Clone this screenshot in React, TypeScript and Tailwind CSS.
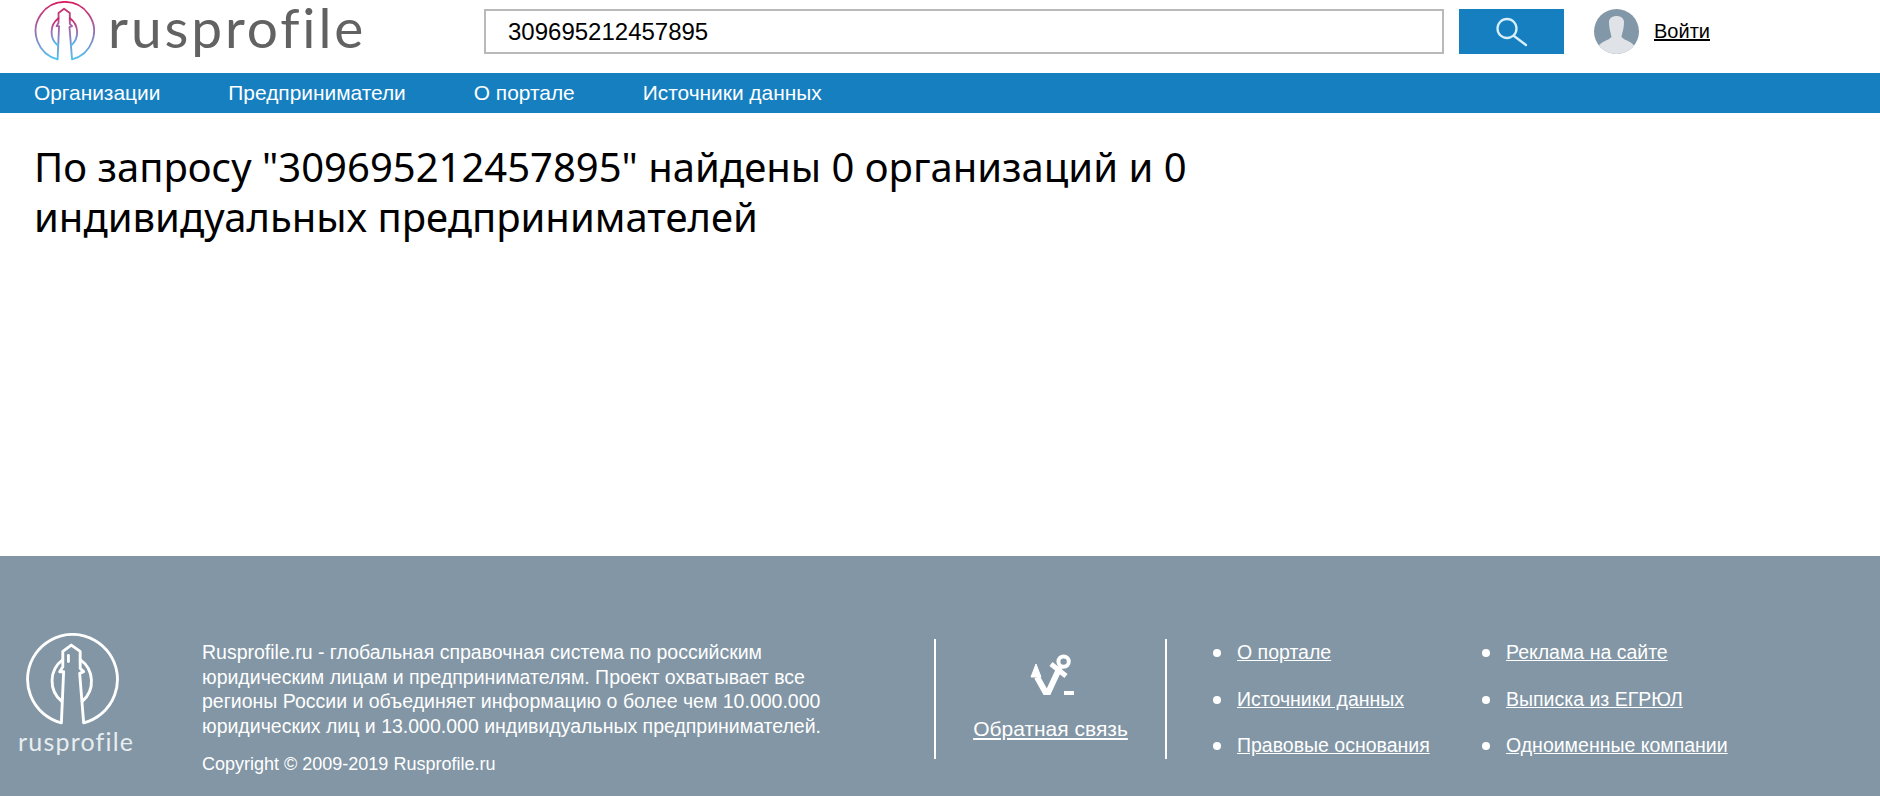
import React from 'react';

const navItems = ['Организации', 'Предприниматели', 'О портале', 'Источники данных'];
const linksLeft = ['О портале', 'Источники данных', 'Правовые основания'];
const linksRight = ['Реклама на сайте', 'Выписка из ЕГРЮЛ', 'Одноименные компании'];

const Lighthouse: React.FC<{ stroke: string; className: string; width: number }> = ({ stroke, className, width }) => (
  <svg viewBox="0 0 92 92" className={className} fill="none" stroke={stroke} strokeWidth={width} strokeLinejoin="round" strokeLinecap="round">
    <path d="M35.6 88 A44 44 0 1 1 57.4 88 L53.5 39.5 L57.4 37.8 L54 34.6 L54 18 L45.3 11.8 L37 18 L37 33 L34 38 L37.8 37.8 Z" />
    <path d="M37 26 A26 26 0 0 0 36 67" />
    <path d="M54 26 A26 26 0 0 1 56 67" />
    <path d="M42.5 22 L42.5 28" />
  </svg>
);

const LinkColumn: React.FC<{ items: string[]; width: string }> = ({ items, width }) => (
  <ul className={`${width} flex flex-col gap-[22.5px]`}>
    {items.map(item => (
      <li key={item} className="flex items-center h-6">
        <span className="w-[8px] h-[8px] rounded-full bg-white mr-[16px]"></span>
        <a className="underline text-[19.5px]">{item}</a>
      </li>
    ))}
  </ul>
);

export default function App() {
  return (
    <div className="h-[796px] flex flex-col bg-white overflow-hidden font-['Liberation_Sans',sans-serif]">
      <header className="h-[73px] flex items-start shrink-0">
        <div className="w-[484px] h-[63px] pl-[34px] flex items-center">
          <svg width="0" height="0" className="absolute">
            <defs>
              <linearGradient id="logoGrad" x1="0" y1="0" x2="0" y2="1">
                <stop offset="0" stopColor="#d81b60" />
                <stop offset="0.5" stopColor="#9a6fb0" />
                <stop offset="1" stopColor="#4fc3f0" />
              </linearGradient>
            </defs>
          </svg>
          <Lighthouse stroke="url(#logoGrad)" className="w-[61px] h-[61px]" width={2.8} />
          <span className="ml-[13px] mb-[8px] text-[55px] leading-[61px] tracking-[2.9px] text-[#626262] font-['Lato',sans-serif] font-normal">rusprofile</span>
        </div>
        <div className="mt-[9px] w-[960px] h-[45px] border-2 border-[#b9b9b9] pl-[22px] flex items-center text-[24px] text-black">309695212457895</div>
        <button className="mt-[9px] ml-[15px] w-[105px] h-[45px] bg-[#167fc0] flex items-center justify-center">
          <svg viewBox="0 0 36 36" className="w-[36px] h-[36px]" fill="none" stroke="#d8effa" strokeWidth={2.3} strokeLinecap="round">
            <circle cx="13" cy="14.5" r="9.5" />
            <path d="M20 22 L32 31" />
          </svg>
        </button>
        <div className="mt-[9px] ml-[30px] w-[45px] h-[45px] rounded-full bg-[#8298a8] overflow-hidden">
          <svg viewBox="0 0 45 45" className="w-[45px] h-[45px]">
            <path d="M15 13 C15 5 30 5 30 13 C30 20 28 24 27.5 28 C31 32 38 32 41 38 L41 45 L4 45 L4 38 C7 32 14 32 17.5 28 C17 24 15 20 15 13 Z" fill="#dfe3e7" />
          </svg>
        </div>
        <a className="mt-[19px] ml-[15px] underline text-[20px] leading-[24px] text-black">Войти</a>
      </header>

      <nav className="h-[40px] bg-[#167fc0] shrink-0 pl-[34px] flex items-center gap-[68px] text-[20.9px] text-white">
        {navItems.map(item => <a key={item}>{item}</a>)}
      </nav>

      <main className="flex-1 pl-[34px]">
        <h1 className="mt-[29px] w-[1180px] text-[40px] leading-[50px] text-black font-['Noto_Sans',sans-serif] font-normal">
          По запросу "309695212457895" найдены 0 организаций и 0 индивидуальных предпринимателей
        </h1>
      </main>

      <footer className="h-[240px] shrink-0 bg-[#8296a5] text-white flex items-start">
        <div className="w-[202px] pl-[18px] pt-[77px] shrink-0 flex flex-col">
          <Lighthouse stroke="#ffffff" className="ml-[7px] w-[94px] h-[94px]" width={2.8} />
          <span className="text-[25px] leading-[28px] tracking-[1.2px] font-['Lato',sans-serif] font-normal text-[#e8edf0]">rusprofile</span>
        </div>
        <div className="w-[732px] pt-[84px] shrink-0">
          <p className="w-[630px] text-[19.5px] leading-[24.5px]">
            Rusprofile.ru - глобальная справочная система по российским юридическим лицам и предпринимателям. Проект охватывает все регионы России и объединяет информацию о более чем 10.000.000 юридических лиц и 13.000.000 индивидуальных предпринимателей.
          </p>
          <p className="mt-[14px] text-[18px] leading-[24px]">Copyright © 2009-2019 Rusprofile.ru</p>
        </div>
        <div className="mt-[83px] w-[233px] h-[120px] border-x-2 border-white shrink-0 flex flex-col items-center pt-[14px]">
          <svg viewBox="0 0 46 42" className="w-[46px] h-[42px]" fill="none" stroke="#ffffff" strokeWidth={6}>
            <circle cx="35.6" cy="8.6" r="5.2" strokeWidth={4} />
            <path d="M32 14 L19 42 L9 24" />
            <path d="M23 11 L38 23" strokeWidth={5} />
            <path d="M3 24 L8 11 L13 24 Z" fill="#ffffff" strokeWidth={1} />
            <path d="M36 40 L46 40" strokeWidth={4} />
          </svg>
          <a className="mt-[20px] underline text-[21px] leading-[28px]">Обратная связь</a>
        </div>
        <div className="pt-[85px] pl-[46px] flex">
          <LinkColumn items={linksLeft} width="w-[269px]" />
          <LinkColumn items={linksRight} width="w-[300px]" />
        </div>
      </footer>
    </div>
  );
}
